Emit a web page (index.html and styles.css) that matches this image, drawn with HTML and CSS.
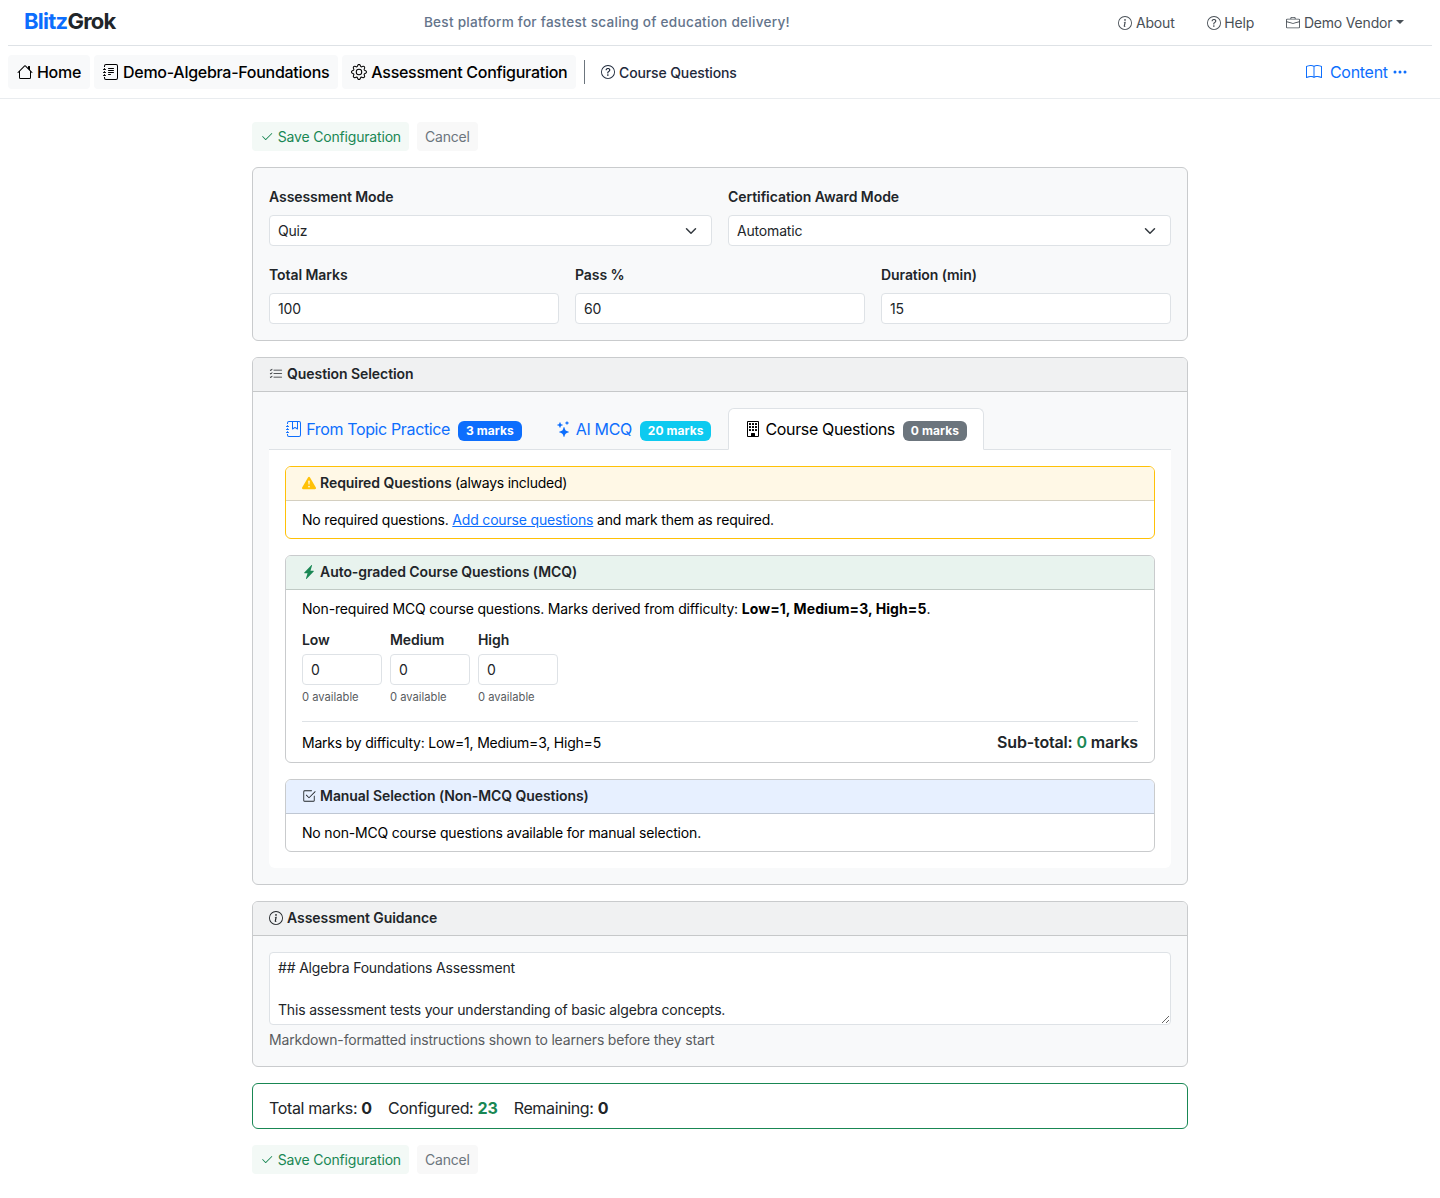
FILE: index.html
```html
<!DOCTYPE html>
<html lang="en">
<head>
  <meta charset="UTF-8" />
  <meta name="viewport" content="width=device-width, initial-scale=1.0"/>
  <title>Assessment Configuration - BlitzGrok</title>
  <link rel="stylesheet" href="styles.css">
</head>
<body>

  <!-- icon sprite -->
  <svg class="sprite" width="0" height="0">
    <symbol id="info-circle" viewBox="0 0 16 16">
      <path d="M8 15A7 7 0 1 1 8 1a7 7 0 0 1 0 14m0 1A8 8 0 1 0 8 0a8 8 0 0 0 0 16"/>
      <path d="m8.93 6.588-2.29.287-.082.38.45.083c.294.07.352.176.288.469l-.738 3.468c-.194.897.105 1.319.808 1.319.545 0 1.178-.252 1.465-.598l.088-.416c-.2.176-.492.246-.686.246-.275 0-.375-.193-.304-.533zM9 4.5a1 1 0 1 1-2 0 1 1 0 0 1 2 0"/>
    </symbol>
    <symbol id="question-circle" viewBox="0 0 16 16">
      <path d="M8 15A7 7 0 1 1 8 1a7 7 0 0 1 0 14m0 1A8 8 0 1 0 8 0a8 8 0 0 0 0 16"/>
      <path d="M5.255 5.786a.237.237 0 0 0 .241.247h.825c.138 0 .248-.113.266-.25.09-.656.54-1.134 1.342-1.134.686 0 1.314.343 1.314 1.168 0 .635-.374.927-.965 1.371-.673.489-1.206 1.06-1.168 1.987l.003.217a.25.25 0 0 0 .25.246h.811a.25.25 0 0 0 .25-.25v-.105c0-.718.273-.927 1.01-1.486.609-.463 1.244-.977 1.244-2.056 0-1.511-1.276-2.241-2.673-2.241-1.267 0-2.655.59-2.75 2.286m1.557 5.763c0 .533.425.927 1.01.927.609 0 1.028-.394 1.028-.927 0-.552-.42-.94-1.029-.94-.584 0-1.009.388-1.009.94"/>
    </symbol>
    <symbol id="briefcase" viewBox="0 0 16 16">
      <path d="M6.5 1A1.5 1.5 0 0 0 5 2.5V3H1.5A1.5 1.5 0 0 0 0 4.5v8A1.5 1.5 0 0 0 1.5 14h13a1.5 1.5 0 0 0 1.5-1.5v-8A1.5 1.5 0 0 0 14.5 3H11v-.5A1.5 1.5 0 0 0 9.5 1zm0 1h3a.5.5 0 0 1 .5.5V3H6v-.5a.5.5 0 0 1 .5-.5m1.886 6.914L15 7.151V12.5a.5.5 0 0 1-.5.5h-13a.5.5 0 0 1-.5-.5V7.15l6.614 1.764a1.5 1.5 0 0 0 .772 0M1.5 4h13a.5.5 0 0 1 .5.5v1.616L8.129 7.948a.5.5 0 0 1-.258 0L1 6.116V4.5a.5.5 0 0 1 .5-.5"/>
    </symbol>
    <symbol id="house" viewBox="0 0 16 16">
      <path d="M8.707 1.5a1 1 0 0 0-1.414 0L.646 8.146a.5.5 0 0 0 .708.708L2 8.207V13.5A1.5 1.5 0 0 0 3.5 15h9a1.5 1.5 0 0 0 1.5-1.5V8.207l.646.647a.5.5 0 0 0 .708-.708L13 5.793V2.5a.5.5 0 0 0-.5-.5h-1a.5.5 0 0 0-.5.5v1.293zM13 7.207V13.5a.5.5 0 0 1-.5.5h-9a.5.5 0 0 1-.5-.5V7.207l5-5z"/>
    </symbol>
    <symbol id="journal-text" viewBox="0 0 16 16">
      <path d="M5 10.5a.5.5 0 0 1 .5-.5h2a.5.5 0 0 1 0 1h-2a.5.5 0 0 1-.5-.5m0-2a.5.5 0 0 1 .5-.5h5a.5.5 0 0 1 0 1h-5a.5.5 0 0 1-.5-.5m0-2a.5.5 0 0 1 .5-.5h5a.5.5 0 0 1 0 1h-5a.5.5 0 0 1-.5-.5m0-2a.5.5 0 0 1 .5-.5h5a.5.5 0 0 1 0 1h-5a.5.5 0 0 1-.5-.5"/>
      <path d="M3 0h10a2 2 0 0 1 2 2v12a2 2 0 0 1-2 2H3a2 2 0 0 1-2-2v-1h1v1a1 1 0 0 0 1 1h10a1 1 0 0 0 1-1V2a1 1 0 0 0-1-1H3a1 1 0 0 0-1 1v1H1V2a2 2 0 0 1 2-2"/>
      <path d="M1 5v-.5a.5.5 0 0 1 1 0V5h.5a.5.5 0 0 1 0 1h-2a.5.5 0 0 1 0-1zm0 3v-.5a.5.5 0 0 1 1 0V8h.5a.5.5 0 0 1 0 1h-2a.5.5 0 0 1 0-1zm0 3v-.5a.5.5 0 0 1 1 0v.5h.5a.5.5 0 0 1 0 1h-2a.5.5 0 0 1 0-1z"/>
    </symbol>
    <symbol id="journal-bookmark" viewBox="0 0 16 16">
      <path fill-rule="evenodd" d="M6 8V1h1v6.117L8.743 6.07a.5.5 0 0 1 .514 0L11 7.117V1h1v7a.5.5 0 0 1-.757.429L9 7.083 6.757 8.43A.5.5 0 0 1 6 8"/>
      <path d="M3 0h10a2 2 0 0 1 2 2v12a2 2 0 0 1-2 2H3a2 2 0 0 1-2-2v-1h1v1a1 1 0 0 0 1 1h10a1 1 0 0 0 1-1V2a1 1 0 0 0-1-1H3a1 1 0 0 0-1 1v1H1V2a2 2 0 0 1 2-2"/>
      <path d="M1 5v-.5a.5.5 0 0 1 1 0V5h.5a.5.5 0 0 1 0 1h-2a.5.5 0 0 1 0-1zm0 3v-.5a.5.5 0 0 1 1 0V8h.5a.5.5 0 0 1 0 1h-2a.5.5 0 0 1 0-1zm0 3v-.5a.5.5 0 0 1 1 0v.5h.5a.5.5 0 0 1 0 1h-2a.5.5 0 0 1 0-1z"/>
    </symbol>
    <symbol id="gear" viewBox="0 0 16 16">
      <path d="M8 4.754a3.246 3.246 0 1 0 0 6.492 3.246 3.246 0 0 0 0-6.492M5.754 8a2.246 2.246 0 1 1 4.492 0 2.246 2.246 0 0 1-4.492 0"/>
      <path d="M9.796 1.343c-.527-1.79-3.065-1.79-3.592 0l-.094.319a.873.873 0 0 1-1.255.52l-.292-.16c-1.64-.892-3.433.902-2.54 2.541l.159.292a.873.873 0 0 1-.52 1.255l-.319.094c-1.79.527-1.79 3.065 0 3.592l.319.094a.873.873 0 0 1 .52 1.255l-.16.292c-.892 1.64.901 3.434 2.541 2.54l.292-.159a.873.873 0 0 1 1.255.52l.094.319c.527 1.79 3.065 1.79 3.592 0l.094-.319a.873.873 0 0 1 1.255-.52l.292.16c1.64.893 3.434-.902 2.54-2.541l-.159-.292a.873.873 0 0 1 .52-1.255l.319-.094c1.79-.527 1.79-3.065 0-3.592l-.319-.094a.873.873 0 0 1-.52-1.255l.16-.292c.893-1.64-.902-3.433-2.541-2.54l-.292.159a.873.873 0 0 1-1.255-.52zm-2.633.283c.246-.835 1.428-.835 1.674 0l.094.319a1.873 1.873 0 0 0 2.693 1.115l.291-.16c.764-.415 1.6.42 1.184 1.185l-.159.292a1.873 1.873 0 0 0 1.116 2.692l.318.094c.835.246.835 1.428 0 1.674l-.319.094a1.873 1.873 0 0 0-1.115 2.693l.16.291c.415.764-.42 1.6-1.185 1.184l-.291-.159a1.873 1.873 0 0 0-2.693 1.116l-.094.318c-.246.835-1.428.835-1.674 0l-.094-.319a1.873 1.873 0 0 0-2.692-1.115l-.292.16c-.764.415-1.6-.42-1.184-1.185l.159-.291A1.873 1.873 0 0 0 1.945 8.93l-.319-.094c-.835-.246-.835-1.428 0-1.674l.319-.094A1.873 1.873 0 0 0 3.06 4.377l-.16-.292c-.415-.764.42-1.6 1.185-1.184l.292.159a1.873 1.873 0 0 0 2.692-1.115z"/>
    </symbol>
    <symbol id="book" viewBox="0 0 16 16">
      <path d="M1 2.828c.885-.37 2.154-.769 3.388-.893 1.33-.134 2.458.063 3.112.752v9.746c-.935-.53-2.12-.603-3.213-.493-1.18.12-2.37.461-3.287.811zm7.5-.141c.654-.689 1.782-.886 3.112-.752 1.234.124 2.503.523 3.388.893v9.923c-.918-.35-2.107-.692-3.287-.81-1.094-.111-2.278-.039-3.213.492zM8 1.783C7.015.936 5.587.81 4.287.94c-1.514.153-3.042.672-3.994 1.105A.5.5 0 0 0 0 2.5v11a.5.5 0 0 0 .707.455c.882-.4 2.303-.881 3.68-1.02 1.409-.142 2.59.087 3.223.877a.5.5 0 0 0 .78 0c.633-.79 1.814-1.019 3.222-.877 1.378.139 2.8.62 3.681 1.02A.5.5 0 0 0 16 13.5v-11a.5.5 0 0 0-.293-.455c-.952-.433-2.48-.952-3.994-1.105C10.413.809 8.985.936 8 1.783"/>
    </symbol>
    <symbol id="three-dots" viewBox="0 0 16 16">
      <path d="M3 9.5a1.5 1.5 0 1 1 0-3 1.5 1.5 0 0 1 0 3m5 0a1.5 1.5 0 1 1 0-3 1.5 1.5 0 0 1 0 3m5 0a1.5 1.5 0 1 1 0-3 1.5 1.5 0 0 1 0 3"/>
    </symbol>
    <symbol id="check2" viewBox="0 0 16 16">
      <path d="M13.854 3.646a.5.5 0 0 1 0 .708l-7 7a.5.5 0 0 1-.708 0l-3.5-3.5a.5.5 0 1 1 .708-.708L6.5 10.293l6.646-6.647a.5.5 0 0 1 .708 0"/>
    </symbol>
    <symbol id="check2-square" viewBox="0 0 16 16">
      <path d="M3 14.5A1.5 1.5 0 0 1 1.5 13V3A1.5 1.5 0 0 1 3 1.5h8a.5.5 0 0 1 0 1H3a.5.5 0 0 0-.5.5v10a.5.5 0 0 0 .5.5h10a.5.5 0 0 0 .5-.5V8a.5.5 0 0 1 1 0v5a1.5 1.5 0 0 1-1.5 1.5z"/>
      <path d="m8.354 10.354 7-7a.5.5 0 0 0-.708-.708L8 9.293 5.354 6.646a.5.5 0 1 0-.708.708l3 3a.5.5 0 0 0 .708 0"/>
    </symbol>
    <symbol id="list-check" viewBox="0 0 16 16">
      <path fill-rule="evenodd" d="M5 11.5a.5.5 0 0 1 .5-.5h9a.5.5 0 0 1 0 1h-9a.5.5 0 0 1-.5-.5m0-4a.5.5 0 0 1 .5-.5h9a.5.5 0 0 1 0 1h-9a.5.5 0 0 1-.5-.5m0-4a.5.5 0 0 1 .5-.5h9a.5.5 0 0 1 0 1h-9a.5.5 0 0 1-.5-.5M3.854 2.146a.5.5 0 0 1 0 .708l-1.5 1.5a.5.5 0 0 1-.708 0l-.5-.5a.5.5 0 1 1 .708-.708L2 3.293l1.146-1.147a.5.5 0 0 1 .708 0m0 4a.5.5 0 0 1 0 .708l-1.5 1.5a.5.5 0 0 1-.708 0l-.5-.5a.5.5 0 1 1 .708-.708L2 7.293l1.146-1.147a.5.5 0 0 1 .708 0m0 4a.5.5 0 0 1 0 .708l-1.5 1.5a.5.5 0 0 1-.708 0l-.5-.5a.5.5 0 0 1 .708-.708l.146.147 1.146-1.147a.5.5 0 0 1 .708 0"/>
    </symbol>
    <symbol id="stars" viewBox="0 0 16 16">
      <path d="M7.657 6.247c.11-.33.576-.33.686 0l.645 1.937a2.89 2.89 0 0 0 1.829 1.828l1.936.645c.33.11.33.576 0 .686l-1.937.645a2.89 2.89 0 0 0-1.828 1.829l-.645 1.936a.361.361 0 0 1-.686 0l-.645-1.937a2.89 2.89 0 0 0-1.828-1.828l-1.937-.645a.361.361 0 0 1 0-.686l1.937-.645a2.89 2.89 0 0 0 1.828-1.828zM3.794 1.148a.217.217 0 0 1 .412 0l.387 1.162c.173.518.579.924 1.097 1.097l1.162.387a.217.217 0 0 1 0 .412l-1.162.387A1.73 1.73 0 0 0 4.593 5.69l-.387 1.162a.217.217 0 0 1-.412 0L3.407 5.69A1.73 1.73 0 0 0 2.31 4.593l-1.162-.387a.217.217 0 0 1 0-.412l1.162-.387A1.73 1.73 0 0 0 3.407 2.31zM10.863.099a.145.145 0 0 1 .274 0l.258.774c.115.346.386.617.732.732l.774.258a.145.145 0 0 1 0 .274l-.774.258a1.16 1.16 0 0 0-.732.732l-.258.774a.145.145 0 0 1-.274 0l-.258-.774a1.16 1.16 0 0 0-.732-.732L9.1 2.137a.145.145 0 0 1 0-.274l.774-.258c.346-.115.617-.386.732-.732z"/>
    </symbol>
    <symbol id="building" viewBox="0 0 16 16">
      <path d="M4 2.5a.5.5 0 0 1 .5-.5h1a.5.5 0 0 1 .5.5v1a.5.5 0 0 1-.5.5h-1a.5.5 0 0 1-.5-.5zm3 0a.5.5 0 0 1 .5-.5h1a.5.5 0 0 1 .5.5v1a.5.5 0 0 1-.5.5h-1a.5.5 0 0 1-.5-.5zm3.5-.5a.5.5 0 0 0-.5.5v1a.5.5 0 0 0 .5.5h1a.5.5 0 0 0 .5-.5v-1a.5.5 0 0 0-.5-.5zM4 5.5a.5.5 0 0 1 .5-.5h1a.5.5 0 0 1 .5.5v1a.5.5 0 0 1-.5.5h-1a.5.5 0 0 1-.5-.5zM7.5 5a.5.5 0 0 0-.5.5v1a.5.5 0 0 0 .5.5h1a.5.5 0 0 0 .5-.5v-1a.5.5 0 0 0-.5-.5zm2.5.5a.5.5 0 0 1 .5-.5h1a.5.5 0 0 1 .5.5v1a.5.5 0 0 1-.5.5h-1a.5.5 0 0 1-.5-.5zM4.5 8a.5.5 0 0 0-.5.5v1a.5.5 0 0 0 .5.5h1a.5.5 0 0 0 .5-.5v-1a.5.5 0 0 0-.5-.5zm2.5.5a.5.5 0 0 1 .5-.5h1a.5.5 0 0 1 .5.5v1a.5.5 0 0 1-.5.5h-1a.5.5 0 0 1-.5-.5zm3.5-.5a.5.5 0 0 0-.5.5v1a.5.5 0 0 0 .5.5h1a.5.5 0 0 0 .5-.5v-1a.5.5 0 0 0-.5-.5z"/>
      <path d="M2 1a1 1 0 0 1 1-1h10a1 1 0 0 1 1 1v14a1 1 0 0 1-1 1H3a1 1 0 0 1-1-1zm11 0H3v14h3v-2.5a.5.5 0 0 1 .5-.5h3a.5.5 0 0 1 .5.5V15h3z"/>
    </symbol>
    <symbol id="warning" viewBox="0 0 16 16">
      <path d="M8.982 1.566a1.13 1.13 0 0 0-1.96 0L.165 13.233c-.457.778.091 1.767.98 1.767h13.713c.889 0 1.438-.99.98-1.767zM8 5c.535 0 .954.462.9.995l-.35 3.507a.552.552 0 0 1-1.1 0L7.1 5.995A.905.905 0 0 1 8 5m.002 6a1 1 0 1 1 0 2 1 1 0 0 1 0-2"/>
    </symbol>
    <symbol id="lightning" viewBox="0 0 16 16">
      <path d="M11.251.068a.5.5 0 0 1 .227.58L9.677 6.5H13a.5.5 0 0 1 .364.843l-8 8.5a.5.5 0 0 1-.842-.49L6.323 9.5H3a.5.5 0 0 1-.364-.843l8-8.5a.5.5 0 0 1 .615-.09z"/>
    </symbol>
  </svg>

  <header class="topbar">
    <a class="brand" href="#"><span>Blitz</span>Grok</a>
    <div class="tagline">Best platform for fastest scaling of education delivery!</div>
    <nav class="top-links">
      <a href="#"><svg class="icon"><use href="#info-circle"/></svg> About</a>
      <a href="#"><svg class="icon"><use href="#question-circle"/></svg> Help</a>
      <a class="dropdown" href="#"><svg class="icon"><use href="#briefcase"/></svg> Demo Vendor</a>
    </nav>
  </header>

  <div class="subnav">
    <nav class="crumbs">
      <a class="crumb" href="#"><svg class="icon"><use href="#house"/></svg> Home</a>
      <a class="crumb" href="#"><svg class="icon"><use href="#journal-text"/></svg> Demo-Algebra-Foundations</a>
      <a class="crumb" href="#"><svg class="icon"><use href="#gear"/></svg> Assessment Configuration</a>
      <span class="divider"></span>
      <a class="sub-link" href="#"><svg class="icon"><use href="#question-circle"/></svg> Course Questions</a>
    </nav>
    <div class="content-menu">
      <svg class="icon book"><use href="#book"/></svg>Content <svg class="icon"><use href="#three-dots"/></svg>
    </div>
  </div>

  <main class="container">
    <div class="actions">
      <button class="btn save" type="button"><svg class="icon"><use href="#check2"/></svg> Save Configuration</button>
      <button class="btn cancel" type="button">Cancel</button>
    </div>

    <div class="card tinted">
      <div class="card-body">
        <div class="row two">
          <div>
            <label for="mode">Assessment Mode</label>
            <div class="select-wrap">
              <select id="mode"><option>Quiz</option></select>
              <svg class="chevron" viewBox="0 0 16 16"><path d="m2 5 6 6 6-6"/></svg>
            </div>
          </div>
          <div>
            <label for="award">Certification Award Mode</label>
            <div class="select-wrap">
              <select id="award"><option>Automatic</option></select>
              <svg class="chevron" viewBox="0 0 16 16"><path d="m2 5 6 6 6-6"/></svg>
            </div>
          </div>
        </div>
        <div class="row three">
          <div>
            <label for="total">Total Marks</label>
            <input type="text" id="total" value="100">
          </div>
          <div>
            <label for="pass">Pass %</label>
            <input type="text" id="pass" value="60">
          </div>
          <div>
            <label for="duration">Duration (min)</label>
            <input type="text" id="duration" value="15">
          </div>
        </div>
      </div>
    </div>

    <div class="card tinted">
      <div class="card-header"><svg class="icon"><use href="#list-check"/></svg> Question Selection</div>
      <div class="card-body">
        <div class="tabs">
          <a class="tab" href="#"><svg class="icon"><use href="#journal-bookmark"/></svg> From Topic Practice <span class="badge blue">3 marks</span></a>
          <a class="tab" href="#"><svg class="icon"><use href="#stars"/></svg> AI MCQ <span class="badge cyan">20 marks</span></a>
          <a class="tab active" href="#"><svg class="icon"><use href="#building"/></svg> Course Questions <span class="badge grey">0 marks</span></a>
        </div>
        <div class="tab-content">

          <div class="card required">
            <div class="card-header"><svg class="icon"><use href="#warning"/></svg> Required Questions <span class="note">(always included)</span></div>
            <div class="card-body">No required questions. <a href="#">Add course questions</a> and mark them as required.</div>
          </div>

          <div class="card auto">
            <div class="card-header"><svg class="icon"><use href="#lightning"/></svg> Auto-graded Course Questions (MCQ)</div>
            <div class="card-body">
              <p>Non-required MCQ course questions. Marks derived from difficulty: <b>Low=1, Medium=3, High=5</b>.</p>
              <div class="levels">
                <div class="level">
                  <label for="low">Low</label>
                  <input type="text" id="low" value="0">
                  <small>0 available</small>
                </div>
                <div class="level">
                  <label for="medium">Medium</label>
                  <input type="text" id="medium" value="0">
                  <small>0 available</small>
                </div>
                <div class="level">
                  <label for="high">High</label>
                  <input type="text" id="high" value="0">
                  <small>0 available</small>
                </div>
              </div>
              <div class="subtotal">
                <span>Marks by difficulty: Low=1, Medium=3, High=5</span>
                <strong>Sub-total: <span class="green">0</span> marks</strong>
              </div>
            </div>
          </div>

          <div class="card manual">
            <div class="card-header"><svg class="icon"><use href="#check2-square"/></svg> Manual Selection (Non-MCQ Questions)</div>
            <div class="card-body">No non-MCQ course questions available for manual selection.</div>
          </div>

        </div>
      </div>
    </div>

    <div class="card tinted">
      <div class="card-header"><svg class="icon"><use href="#info-circle"/></svg> Assessment Guidance</div>
      <div class="card-body">
        <textarea rows="3">## Algebra Foundations Assessment

This assessment tests your understanding of basic algebra concepts.</textarea>
        <div class="help">Markdown-formatted instructions shown to learners before they start</div>
      </div>
    </div>

    <div class="card totals">
      <span>Total marks: <b>0</b></span>
      <span>Configured: <b class="green">23</b></span>
      <span>Remaining: <b>0</b></span>
    </div>

    <div class="actions">
      <button class="btn save" type="button"><svg class="icon"><use href="#check2"/></svg> Save Configuration</button>
      <button class="btn cancel" type="button">Cancel</button>
    </div>
  </main>

</body>
</html>
```

FILE: styles.css
```css
* {
  box-sizing: border-box;
}

body {
  font-family: Inter, sans-serif;
  font-size: 16px;
  line-height: 1.5;
  letter-spacing: -0.18px;
  color: #212529;
  background: #fff;
  margin: 0;
}

a {
  color: #0d6efd;
}

.sprite {
  display: block;
}

.icon {
  width: 1em;
  height: 1em;
  fill: currentColor;
  vertical-align: -0.125em;
}

/* header */
.topbar {
  display: flex;
  justify-content: space-between;
  align-items: center;
  height: 46px;
  margin: 0 8px;
  padding: 0 12px 0 16px;
  border-bottom: 1px solid #dee2e6;
}

.brand {
  font-size: 22px;
  font-weight: 700;
  letter-spacing: -0.75px;
  color: #212529;
  text-decoration: none;
  padding-bottom: 3px;
  margin-right: -4px;
}

.brand span {
  color: #0d6efd;
}

.tagline {
  font-size: 13.6px;
  font-weight: 500;
  letter-spacing: 0.25px;
  color: #64748b;
}

.top-links {
  display: flex;
  font-size: 14px;
}

.top-links a {
  color: #495057;
  text-decoration: none;
  padding: 0 16px;
}

.dropdown::after {
  content: "";
  display: inline-block;
  vertical-align: 0.255em;
  border-top: 4px solid;
  border-left: 4px solid transparent;
  border-right: 4px solid transparent;
  margin-left: 3.6px;
}

.subnav {
  display: flex;
  justify-content: space-between;
  align-items: center;
  height: 53px;
  padding: 0 32px 0 8px;
  border-bottom: 1px solid #e9ecef;
}

.crumbs {
  display: flex;
  align-items: center;
  gap: 4px;
}

.crumbs a {
  text-decoration: none;
  font-weight: 500;
}

.crumb {
  color: #000;
  background: #f8f9fa;
  padding: 5px 9px;
  border-radius: 4px;
  letter-spacing: -0.28px;
}

.divider {
  width: 1px;
  height: 24px;
  background: #6c757d;
  margin: 0 12px 0 4px;
}

.crumbs .sub-link {
  font-size: 14px;
  letter-spacing: -0.12px;
  color: #1e293b;
}

.content-menu {
  color: #0d6efd;
  letter-spacing: -0.28px;
}

.book {
  margin-right: 8px;
}

/* page */
.container {
  width: 936px;
  margin: 23px auto 24px;
  display: flex;
  flex-direction: column;
  gap: 16px;
}

.actions {
  display: flex;
  gap: 8px;
}

.btn {
  font: 14px/21px Inter, sans-serif;
  letter-spacing: -0.18px;
  padding: 4px 8px;
  border: none;
  border-radius: 4px;
}

.save {
  color: #198754;
  background: #f3f9f6;
}

.cancel {
  color: #6c757d;
  background: #f8f8f8;
}

.card {
  background: #fff;
  border: 1px solid #c9cbcd;
  border-radius: 6px;
}

.tinted {
  background: #f8f9fa;
}

.card-header {
  font-size: 14px;
  font-weight: 600;
  letter-spacing: -0.07px;
  padding: 5px 16px 7px;
  background: #f0f1f2;
  border-bottom: 1px solid #c6c8c9;
  border-radius: 5px 5px 0 0;
}

.card-header .icon {
  margin-right: 0.6px;
}

.card-body {
  padding: 16px;
}

.row {
  display: grid;
  gap: 16px;
}

.two {
  grid-template-columns: 1fr 1fr;
  margin-bottom: 16px;
}

.three {
  grid-template-columns: 1fr 1fr 1fr;
}

label {
  display: block;
  font-size: 14px;
  font-weight: 600;
  letter-spacing: -0.07px;
  color: #212529;
  padding: 2px 0 8px;
}

input, select, textarea {
  display: block;
  width: 100%;
  font: 14px/21px Inter, sans-serif;
  letter-spacing: -0.18px;
  color: #212529;
  background: #fff;
  padding: 4px 8px;
  border: 1px solid #dee2e6;
  border-radius: 4px;
}

input, select {
  height: 31px;
}

select {
  appearance: none;
}

.select-wrap {
  position: relative;
}

.chevron {
  position: absolute;
  top: 10px;
  right: 13px;
  width: 16px;
  height: 12px;
  fill: none;
  stroke: #343a40;
  stroke-width: 2;
  stroke-linecap: round;
  stroke-linejoin: round;
}

/* tabs */
.tabs {
  display: flex;
  border-bottom: 1px solid #dee2e6;
}

.tab {
  padding: 8px 16px;
  border: 1px solid transparent;
  border-radius: 6px 6px 0 0;
  margin-bottom: -1px;
  letter-spacing: -0.36px;
  text-decoration: none;
}

.tab.active {
  color: #000;
  background: #fff;
  border-color: #dee2e6 #dee2e6 #fff;
}

.badge {
  display: inline-block;
  font-size: 12px;
  font-weight: 700;
  line-height: 1;
  letter-spacing: 0.08px;
  color: #fff;
  padding: 0.35em 0.65em;
  border-radius: 6px;
  margin-left: 4px;
  vertical-align: baseline;
}

.blue {
  background: #0d6efd;
}

.cyan {
  background: #0dcaf0;
}

.grey {
  background: #6c757d;
}

.tab-content {
  display: flex;
  flex-direction: column;
  gap: 16px;
  padding: 16px;
  background: #fff;
  border-radius: 0 0 6px 6px;
}

.tab-content .card-body {
  font-size: 14px;
  color: #000;
  padding: 8px 16px;
}

.required {
  border-color: #ffc107;
}

.required .card-header {
  background: #fff8e6;
  border-color: #d4cfc0;
}

.required .icon {
  color: #ffc107;
}

.note {
  font-weight: 400;
  letter-spacing: -0.25px;
  color: #000;
}

.auto .card-header {
  background: #e8f3ee;
  border-color: #c0cac5;
}

.auto .icon, .green {
  color: #198754;
}

.manual .card-header {
  background: #e7f0ff;
  border-color: #bfc7d3;
}

.auto p {
  margin: 0 0 8px;
}

.auto b {
  letter-spacing: 0.08px;
}

.levels {
  display: flex;
  gap: 8px;
}

.level {
  width: 80px;
}

.level label {
  padding-bottom: 4px;
}

.level small {
  display: block;
  font-size: 11.2px;
  line-height: 17px;
  letter-spacing: 0;
  color: #595c5f;
  margin-top: 4px;
}

.subtotal {
  display: flex;
  justify-content: space-between;
  align-items: center;
  margin-top: 15px;
  padding-top: 8px;
  border-top: 1px solid #dee2e6;
  letter-spacing: -0.22px;
}

.subtotal strong {
  font-size: 16px;
  font-weight: 600;
  letter-spacing: -0.16px;
  color: #212529;
}

textarea {
  height: 73px;
  resize: vertical;
}

.help {
  font-size: 14px;
  color: #595c5f;
  margin-top: 4px;
}

.totals {
  display: flex;
  gap: 16px;
  padding: 12px 16px 8px;
  border-color: #198754;
  letter-spacing: -0.36px;
}

.totals b {
  letter-spacing: -0.1px;
}
```
